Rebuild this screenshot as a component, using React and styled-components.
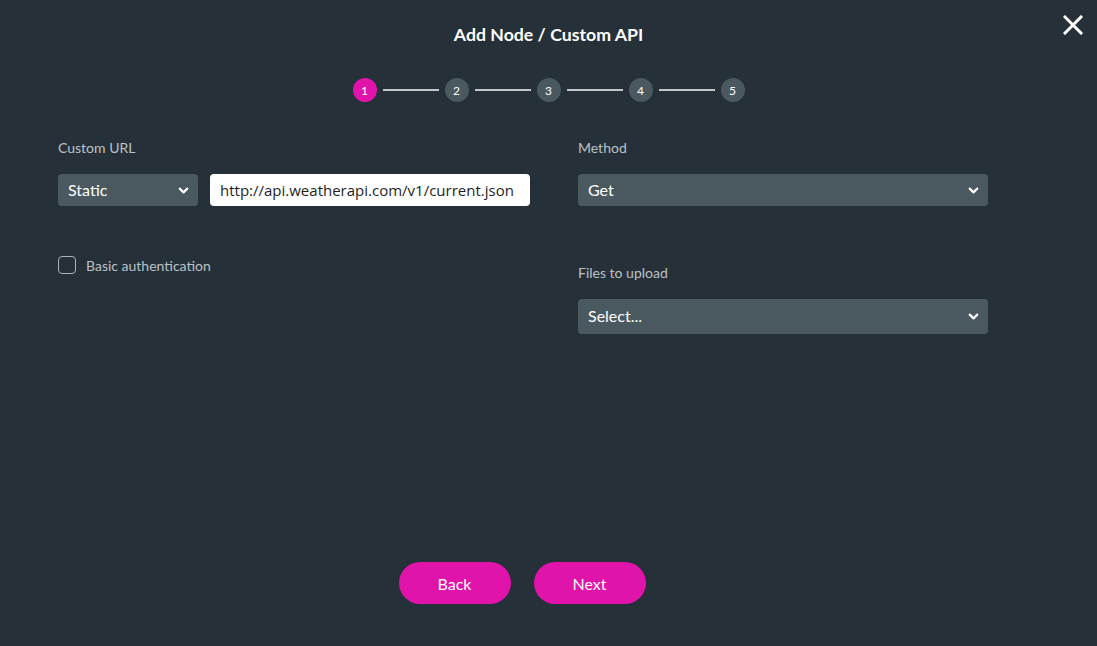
import styled, { createGlobalStyle } from "styled-components";
import { ChevronDown } from "lucide-react";

const GlobalStyle = createGlobalStyle`
  html, body {
    margin: 0;
    padding: 0;
    background: #263038;
  }
  body {
    font-family: Lato, "Noto Sans", sans-serif;
  }
`;

const Modal = styled.div`
  position: relative;
  width: 1097px;
  height: 646px;
  background: #263038;
  color: #fff;
  box-sizing: border-box;
  padding: 24px 58px 0 58px;
  display: flex;
  flex-direction: column;
`;

const CloseButton = styled.button`
  position: absolute;
  top: 13px;
  right: 12px;
  width: 24px;
  height: 24px;
  padding: 0;
  border: none;
  background: transparent;
  display: flex;
  align-items: center;
  justify-content: center;
  cursor: pointer;
`;

const Title = styled.h1`
  margin: 0;
  font-size: 17.7px;
  line-height: 22px;
  font-weight: 700;
  text-align: center;
  color: #fff;
`;

const Stepper = styled.div`
  margin-top: 32px;
  display: flex;
  align-items: center;
  justify-content: center;
  gap: 6px;
`;

const Step = styled.div`
  width: 24px;
  height: 24px;
  border-radius: 50%;
  background: ${(p) => (p.$active ? "#e013aa" : "#4a5960")};
  color: #fff;
  font-size: 12px;
  font-weight: 400;
  display: flex;
  align-items: center;
  justify-content: center;
`;

const StepLine = styled.div`
  width: 56px;
  height: 2px;
  background: #c3c7ca;
`;

const Form = styled.div`
  margin-top: 38px;
  display: grid;
  grid-template-columns: 490px 410px;
  column-gap: 30px;
`;

const Column = styled.div`
  display: flex;
  flex-direction: column;
`;

const Label = styled.div`
  font-size: 14px;
  line-height: 16px;
  color: #bcc2c7;
  margin-top: ${(p) => p.$top || 0}px;
  margin-bottom: ${(p) => p.$bottom || 18}px;
`;

const Row = styled.div`
  display: flex;
  gap: 12px;
`;

const Select = styled.div`
  box-sizing: border-box;
  width: ${(p) => p.$width || "100%"};
  height: ${(p) => p.$height || 32}px;
  background: #4a5960;
  border-radius: 4px;
  padding: 0 7px 2px 10px;
  display: flex;
  align-items: center;
  justify-content: space-between;
  font-size: 16px;
  color: #fff;

  svg {
    margin-top: 2px;
  }
`;

const TextInput = styled.div`
  box-sizing: border-box;
  width: 320px;
  height: 32px;
  background: #fff;
  border-radius: 4px;
  padding: 0 10px;
  display: flex;
  align-items: center;
  font-family: "Open Sans", "Liberation Sans", sans-serif;
  font-size: 15px;
  white-space: nowrap;
  color: #1e1e1e;
`;

const CheckRow = styled.label`
  margin-top: 50px;
  display: flex;
  align-items: center;
  gap: 10px;
  font-size: 14px;
  color: #bcc2c7;
`;

const CheckBox = styled.span`
  box-sizing: border-box;
  width: 18px;
  height: 18px;
  border: 1.5px solid #aab1b6;
  border-radius: 4px;
`;

const Footer = styled.div`
  margin-top: auto;
  margin-bottom: 42px;
  display: flex;
  justify-content: center;
  gap: 23px;
  padding-right: 53px;
`;

const PillButton = styled.button`
  width: 112px;
  height: 42px;
  border: none;
  border-radius: 21px;
  background: #e013aa;
  color: #fff;
  font-family: Lato, sans-serif;
  font-size: 16px;
  cursor: pointer;
`;

const Chevron = () => <ChevronDown size={15} strokeWidth={3.5} color="#fff" />;

export default function App() {
  return (
    <>
      <GlobalStyle />
      <Modal>
        <CloseButton aria-label="Close">
          <svg width="20" height="20" viewBox="0 0 20 20">
            <path d="M2 2 L18 18 M18 2 L2 18" stroke="#fff" strokeWidth="3" strokeLinecap="square" />
          </svg>
        </CloseButton>
        <Title>Add Node / Custom API</Title>
        <Stepper>
          {[1, 2, 3, 4, 5].map((n) => (
            <>
              {n > 1 && <StepLine key={`l${n}`} />}
              <Step key={n} $active={n === 1}>{n}</Step>
            </>
          ))}
        </Stepper>
        <Form>
          <Column>
            <Label>Custom URL</Label>
            <Row>
              <Select $width="140px">
                Static
                <Chevron />
              </Select>
              <TextInput>http://api.weatherapi.com/v1/current.json</TextInput>
            </Row>
            <CheckRow>
              <CheckBox />
              Basic authentication
            </CheckRow>
          </Column>
          <Column>
            <Label>Method</Label>
            <Select>
              Get
              <Chevron />
            </Select>
            <Label $top={59} $bottom={18}>Files to upload</Label>
            <Select $height={35}>
              Select...
              <Chevron />
            </Select>
          </Column>
        </Form>
        <Footer>
          <PillButton>Back</PillButton>
          <PillButton>Next</PillButton>
        </Footer>
      </Modal>
    </>
  );
}
